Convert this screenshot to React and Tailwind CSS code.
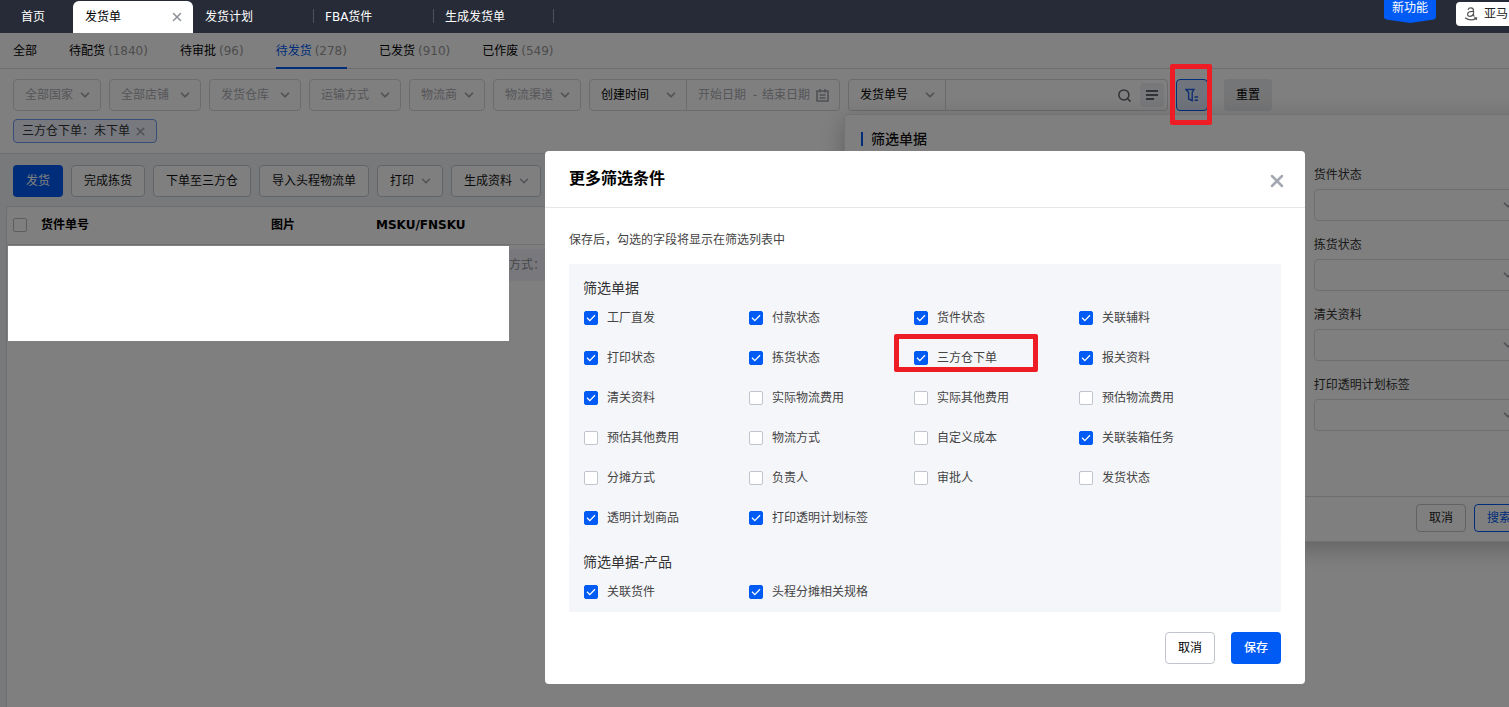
import { ChevronDown, X, Search } from "lucide-react";

const openTabs = ["发货计划", "FBA货件", "生成发货单"];

const statusTabs = [
  { name: "全部" },
  { name: "待配货", count: 1840 },
  { name: "待审批", count: 96 },
  { name: "待发货", count: 278, active: true },
  { name: "已发货", count: 910 },
  { name: "已作废", count: 549 },
];

const quickFilters = [
  { name: "全部国家", width: "w-[88px]" },
  { name: "全部店铺", width: "w-[92px]" },
  { name: "发货仓库", width: "w-[92px]" },
  { name: "运输方式", width: "w-[92px]" },
  { name: "物流商", width: "w-[76px]" },
  { name: "物流渠道", width: "w-[88px]" },
];

const drawerFields = ["货件状态", "拣货状态", "清关资料", "打印透明计划标签"];

const sections = [
  {
    title: "筛选单据",
    items: [
      { name: "工厂直发", checked: true },
      { name: "付款状态", checked: true },
      { name: "货件状态", checked: true },
      { name: "关联辅料", checked: true },
      { name: "打印状态", checked: true },
      { name: "拣货状态", checked: true },
      { name: "三方仓下单", checked: true, marked: true },
      { name: "报关资料", checked: true },
      { name: "清关资料", checked: true },
      { name: "实际物流费用" },
      { name: "实际其他费用" },
      { name: "预估物流费用" },
      { name: "预估其他费用" },
      { name: "物流方式" },
      { name: "自定义成本" },
      { name: "关联装箱任务", checked: true },
      { name: "分摊方式" },
      { name: "负责人" },
      { name: "审批人" },
      { name: "发货状态" },
      { name: "透明计划商品", checked: true },
      { name: "打印透明计划标签", checked: true },
    ],
  },
  {
    title: "筛选单据-产品",
    items: [
      { name: "关联货件", checked: true },
      { name: "头程分摊相关规格", checked: true },
    ],
  },
];

function Arrow() {
  return (
    <ChevronDown
      size={14}
      strokeWidth={3}
      className="pointer-events-none absolute right-2 top-1/2 -translate-y-1/2 text-[#a0a3a9]"
    />
  );
}

function Select({ label, className }) {
  return (
    <div className={`relative shrink-0 ${className}`}>
      <select
        aria-label={label}
        className="h-full w-full appearance-none rounded bg-transparent pl-[11px] outline-none"
      >
        <option>{label}</option>
      </select>
      <Arrow />
    </div>
  );
}

function Checkbox({ name, checked }) {
  return (
    <label className="flex items-center gap-[9px] text-[#444]">
      <span className="relative size-3.5">
        <input
          type="checkbox"
          defaultChecked={checked}
          className="peer block size-3.5 appearance-none rounded-xs border border-[#c0c4cc] bg-white checked:border-[#005bf5] checked:bg-[#005bf5]"
        />
        <svg
          viewBox="0 0 14 14"
          className="pointer-events-none absolute inset-0 hidden peer-checked:block"
          fill="none"
          stroke="#fff"
          strokeWidth="1.3"
        >
          <path d="M3 6.8 L5.8 9.6 L11 4.2" />
        </svg>
      </span>
      {name}
    </label>
  );
}

function Header() {
  return (
    <header className="flex h-[33px] shrink-0 items-start bg-[#262b37] text-white">
      <nav className="flex h-full shrink-0 items-end">
        <a href="#home" className="w-[73px] pl-[21px] leading-8">
          首页
        </a>
        <div className="flex h-8 w-[120px] items-center justify-between rounded-t-md bg-white pr-[9px] pl-3 text-black">
          <a href="#orders">发货单</a>
          <button aria-label="关闭">
            <X size={14} strokeWidth={2.5} className="text-[#8c9097]" />
          </button>
        </div>
        {openTabs.map((tab) => (
          <div key={tab} className="relative flex h-8 w-[120px] items-center pl-3">
            <a href="#tab">{tab}</a>
            <span className="absolute top-2 left-full h-3.5 w-px bg-[#4d525e]" />
          </div>
        ))}
      </nav>
      <div className="ml-auto flex shrink-0 gap-5">
        <a href="#new" className="relative block h-[23px] w-[52px] text-center">
          <svg viewBox="0 0 52 23" className="absolute inset-0" fill="#005bf5">
            <path d="M0 0 H52 V17 Q52 19 50 19.4 L26 23 L2 19.4 Q0 19 0 17 Z" />
          </svg>
          <span className="relative leading-3">新功能</span>
        </a>
        <button className="mt-0.5 flex h-6 w-[53px] items-center gap-1.5 overflow-hidden rounded-l bg-white pl-2 whitespace-nowrap text-[#222]">
          <svg
            width="14"
            height="14"
            viewBox="0 0 14 14"
            fill="none"
            stroke="#555"
            strokeWidth="1.2"
            className="shrink-0"
          >
            <path d="M4 2.8 Q4.4 0.9 6.8 0.9 Q9.5 0.9 9.5 3.4 V7.4 Q9.5 8.8 10.4 9.4 M9.5 4.4 Q3.6 4.2 3.6 7.2 Q3.6 9.3 6 9.3 Q8.6 9.3 9.5 6.8" />
            <path d="M1 10.8 Q6.5 14.8 12 11.4 M10.2 10.9 L12.6 10.8 L12.2 13" />
          </svg>
          亚马
        </button>
      </div>
    </header>
  );
}

function FilterDrawer() {
  return (
    <section className="absolute top-full -left-[5px] z-10 mt-1 w-[697px] rounded border border-[#e4e4e6] bg-white shadow-[0_6px_24px_rgba(0,0,0,0.25)]">
      <div className="h-[381px] px-4 pt-3">
        <h2 className="flex items-center gap-2 text-sm leading-6 font-medium text-[#111]">
          <span className="h-3.5 w-0.5 bg-[#005bf5]" />
          筛选单据
        </h2>
        <div className="mt-3.5 grid grid-cols-3 gap-x-4 gap-y-3.5">
          {drawerFields.map((field) => (
            <label key={field} className="col-start-3 block leading-5 text-[#333]">
              {field}
              <span className="relative mt-1 block h-8 rounded border border-[#dcdde0]">
                <select className="block h-full w-full appearance-none bg-transparent pl-3" />
                <Arrow />
              </span>
            </label>
          ))}
        </div>
      </div>
      <div className="flex h-[45px] justify-end gap-2 border-t border-[#dcdde0] px-4 pt-[7px]">
        <button className="h-7 w-[50px] rounded border border-[#c0c4cc] text-[#222]">取消</button>
        <button className="h-7 w-[50px] rounded border border-[#005bf5] text-[#005bf5]">搜索</button>
      </div>
    </section>
  );
}

function Filters() {
  return (
    <div className="border-b border-[#dcdfe4] bg-white px-[13px] pt-2.5 pb-2.5">
      <div className="flex h-8 gap-2">
        {quickFilters.map((f) => (
          <Select
            key={f.name}
            label={f.name}
            className={`rounded border border-[#d6d8dc] text-[#abadb3] ${f.width}`}
          />
        ))}

        <div className="flex w-[251px] shrink-0 rounded border border-[#d6d8dc]">
          <Select label="创建时间" className="w-[97px] border-r border-[#d6d8dc] text-black" />
          <div className="flex flex-1 items-center gap-1 pl-[11px] text-[#abadb3]">
            <input
              aria-label="开始日期"
              placeholder="开始日期"
              className="w-[50px] placeholder:text-[#abadb3]"
            />
            <span className="w-1.5 text-center">-</span>
            <input
              aria-label="结束日期"
              placeholder="结束日期"
              className="w-[50px] placeholder:text-[#abadb3]"
            />
            <svg width="13" height="13" viewBox="0 0 13 13" fill="none" stroke="#a0a3a9" strokeWidth="1.6">
              <path d="M1 2 H12 V12 H1 Z M4 0 V3.5 M9 0 V3.5 M3.5 6 H9.5 M3.5 9 H9.5" />
            </svg>
          </div>
        </div>

        <div className="relative flex w-80 shrink-0 rounded border border-[#d6d8dc]">
          <Select label="发货单号" className="w-[97px] border-r border-[#d6d8dc] text-black" />
          <input aria-label="搜索内容" className="min-w-0 flex-1 px-3" />
          <button aria-label="搜索" className="px-2">
            <Search size={15} strokeWidth={2.4} className="text-[#62666f]" />
          </button>
          <button
            aria-label="批量搜索"
            className="mt-[3px] mr-[3px] flex size-6 items-center justify-center rounded bg-[#f0f1f4]"
          >
            <svg width="12" height="10" viewBox="0 0 12 10" stroke="#62666f" strokeWidth="1.8">
              <path d="M0 1 H12 M0 5 H12 M0 9 H8" />
            </svg>
          </button>
          <FilterDrawer />
        </div>

        <div className="relative shrink-0">
          <button
            aria-label="更多筛选"
            className="flex size-8 items-center justify-center rounded border border-[#005bf5] bg-[#e0e8fa]"
          >
            <svg width="14" height="14" viewBox="0 0 14 14" fill="none" stroke="#1f5fe0" strokeWidth="1.4">
              <path d="M1 1.5 H9 L7.2 4.5 V12.6 L3.6 11 V4.5 Z" />
              <path d="M9.5 9 H13 M9.5 12.3 H13" />
            </svg>
          </button>
          <span className="pointer-events-none absolute -top-[15px] -left-1.5 z-30 h-[61px] w-[42px] rounded-xs border-5 border-[#ee1c25]" />
        </div>
        <button className="ml-2 h-8 w-12 shrink-0 rounded bg-[#ebecee] text-black">重置</button>
      </div>

      <div className="mt-2 flex">
        <span className="flex h-6 w-36 items-center justify-between rounded border border-[#6c9af0] bg-[#eef2fc] pr-[9px] pl-2 whitespace-nowrap text-[#333]">
          三方仓下单：未下单
          <button aria-label="移除">
            <X size={13} strokeWidth={3} className="text-[#a0a3a9]" />
          </button>
        </span>
      </div>
    </div>
  );
}

function Toolbar() {
  const button = "h-8 shrink-0 rounded border border-[#c6c9cf] bg-white px-3 text-[#111]";
  const menu = "flex items-center justify-between pr-[9px]";
  return (
    <div className="flex gap-2 px-[13px] pt-[11px] pb-[9px]">
      <button className="h-8 w-[50px] shrink-0 rounded bg-[#005bf5] text-white">发货</button>
      <button className={button}>完成拣货</button>
      <button className={button}>下单至三方仓</button>
      <button className={button}>导入头程物流单</button>
      <button className={`${button} ${menu} w-[66px]`}>
        打印
        <ChevronDown size={14} strokeWidth={2.5} className="text-[#a0a3a9]" />
      </button>
      <button className={`${button} ${menu} w-[90px]`}>
        生成资料
        <ChevronDown size={14} strokeWidth={2.5} className="text-[#a0a3a9]" />
      </button>
    </div>
  );
}

function OrderTable() {
  return (
    <div className="ml-1.5 flex-1 rounded-tl border-t border-l border-[#dcdfe4] bg-white">
      <table className="w-full table-fixed border-collapse text-left">
        <thead>
          <tr className="h-[37px] border-b border-[#dcdfe4] text-black">
            <th className="w-[34px] pl-1.5">
              <input
                type="checkbox"
                aria-label="全选"
                className="block size-3.5 appearance-none rounded-xs border border-[#b8bbc2]"
              />
            </th>
            <th className="w-[230px] font-bold">货件单号</th>
            <th className="w-[105px] font-bold">图片</th>
            <th className="font-bold">MSKU/FNSKU</th>
          </tr>
        </thead>
        <tbody>
          <tr>
            <td colSpan={4} className="pt-1 pl-px">
              <div className="relative h-8 bg-[#f0f1fa] pl-[501px] leading-8 text-[#8f9197]">
                方式：
                <span className="absolute -top-[3px] left-0 z-30 h-[95px] w-[501px] bg-white" />
              </div>
            </td>
          </tr>
        </tbody>
      </table>
    </div>
  );
}

function MoreFiltersModal() {
  return (
    <div className="absolute inset-0 z-20 flex items-start justify-end bg-black/50 pt-[118px] pr-[204px]">
      <div role="dialog" aria-label="更多筛选条件" className="w-[760px] rounded bg-white">
        <div className="flex h-[57px] items-center justify-between border-b border-[#e6e6e8] pr-[18px] pl-6">
          <h1 className="text-base font-bold text-black">更多筛选条件</h1>
          <button aria-label="关闭" className="pt-1">
            <X size={20} strokeWidth={3} className="text-[#a3a8b2]" />
          </button>
        </div>
        <div className="px-6 pt-[22px] pb-5">
          <p className="mb-3.5 leading-5 text-[#444]">保存后，勾选的字段将显示在筛选列表中</p>
          {sections.map((section) => (
            <div key={section.title} className="rounded-xs bg-[#f5f6fa] pt-3.5 pr-[37px] pl-3.5">
              <h3 className="text-sm leading-5 text-[#333]">{section.title}</h3>
              <div className="grid grid-cols-4 pl-px">
                {section.items.map((item) => (
                  <div key={item.name} className="relative flex h-10 items-center">
                    <Checkbox name={item.name} checked={item.checked} />
                    {item.marked && (
                      <span className="pointer-events-none absolute -top-1 -left-5 h-[38px] w-36 rounded-xs border-5 border-[#ee1c25]" />
                    )}
                  </div>
                ))}
              </div>
            </div>
          ))}
          <div className="mt-5 flex justify-end gap-4">
            <button className="h-8 w-[50px] rounded border border-[#c0c4cc] text-black">取消</button>
            <button className="h-8 w-[50px] rounded bg-[#005bf5] font-medium text-white">保存</button>
          </div>
        </div>
      </div>
    </div>
  );
}

export default function App() {
  return (
    <div className="flex min-h-screen flex-col overflow-hidden bg-[#f0f3f6] font-['DejaVu_Sans','Noto_Sans_CJK_SC',sans-serif] text-xs">
      <Header />
      <main className="relative flex flex-1 flex-col">
        <nav className="flex h-9 gap-8 border-b border-[#dcdde0] bg-white px-[13px]">
          {statusTabs.map((tab) => (
            <a
              key={tab.name}
              href="#status"
              className={`h-9 shrink-0 border-b-2 leading-9 ${
                tab.active ? "border-[#005bf5] text-[#005bf5]" : "border-transparent text-black"
              }`}
            >
              {tab.name}
              {tab.count && <span className="ml-[3px] text-[#999]">({tab.count})</span>}
            </a>
          ))}
        </nav>
        <Filters />
        <Toolbar />
        <OrderTable />
        <MoreFiltersModal />
      </main>
    </div>
  );
}
